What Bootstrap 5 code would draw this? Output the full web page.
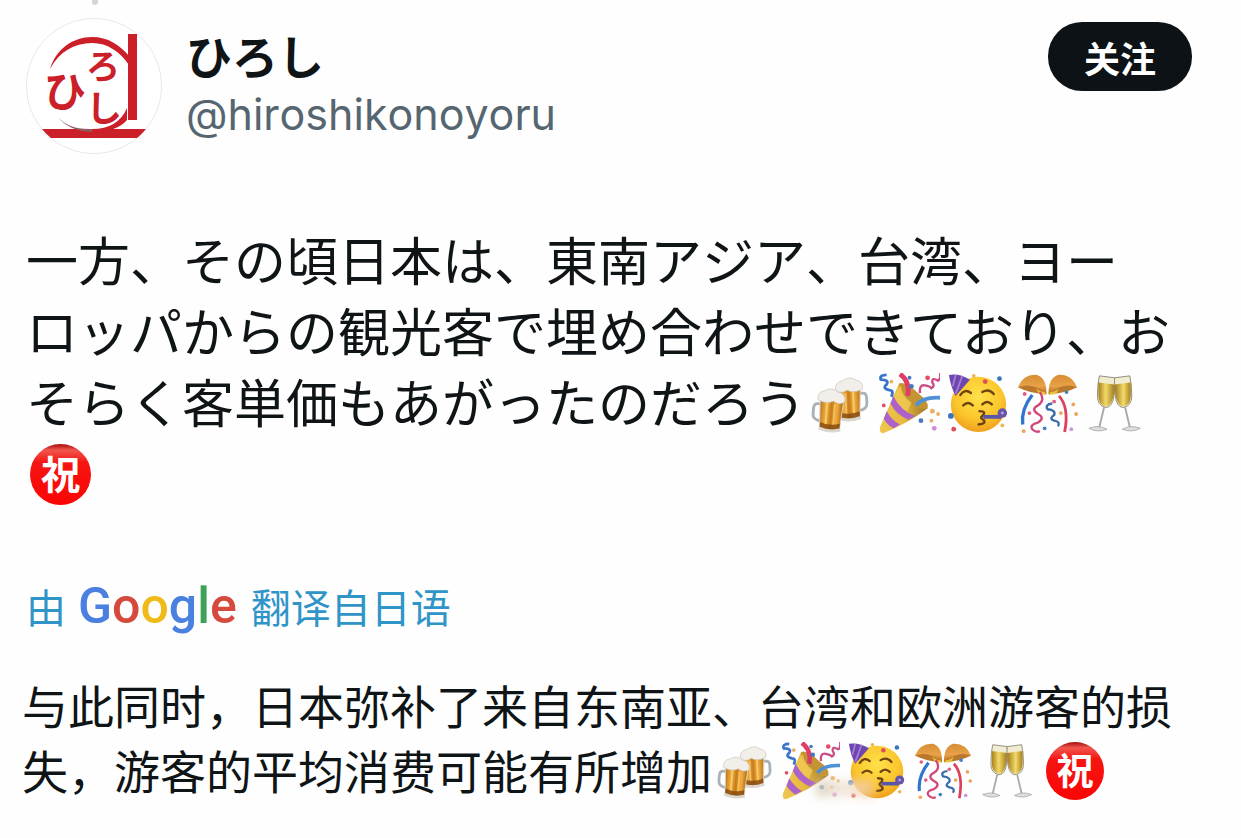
<!DOCTYPE html>
<html lang="ja">
<head>
<meta charset="utf-8">
<meta name="viewport" content="width=device-width, initial-scale=1">
<title>ひろし (@hiroshikonoyoru)</title>
<link href="https://cdn.jsdelivr.net/npm/bootstrap@5.3.0/dist/css/bootstrap.min.css" rel="stylesheet">
<style>
  body { background: #fefefe; color: #0f1416; font-family: Inter, "Noto Sans CJK JP", sans-serif; font-kerning: none; }
  .post-page { padding: 18px 49px 24px 26px; }
  .thread-line { position: absolute; top: 0; left: 92px; width: 6px; height: 5px; border-radius: 0 0 3px 3px; background: #d3d5d6; }
  .avatar { width: 136px; height: 136px; }
  .display-name { font: 700 46px/56px "Noto Sans CJK JP", sans-serif; }
  .handle { font-size: 43px; line-height: 64px; color: #566670; }
  .btn-follow { width: 144px; height: 69px; border-radius: 34px; background: #0c1215; color: #fff; font: 700 36px/1 "Noto Sans CJK SC", sans-serif; }
  .btn-follow:hover { background: #272c30; color: #fff; }
  .post-text { font: 400 52px/71px "Noto Sans CJK JP", sans-serif; font-kerning: none; margin-top: 69px; }
  .source-line { font: 400 40px/60px "Noto Sans CJK SC", sans-serif; color: #2f95c8; margin-top: 69px; }
  .source-line a { color: inherit; text-decoration: none; }
  .google-word { font: 500 50px/60px Roboto, sans-serif; margin: 0 14px 0 12px; }
  .translated-text { font: 400 46px/65px "Noto Sans CJK SC", sans-serif; font-kerning: none; margin: 36px -4px 0; }
  .emoji { width: 61px; height: 61px; margin: 0 4px; vertical-align: -11px; }
  .translated-text .emoji { width: 58px; height: 58px; }
  .smudge { position: absolute; left: 38px; bottom: 5px; width: 58px; height: 17px; background: linear-gradient(90deg, #d9ccb4, #f2e6da, #f3c690); filter: blur(4px); opacity: .8; z-index: 1; }
  .c-blue { color: #4a80e0; } .c-red { color: #d64a3d; } .c-yellow { color: #f0bb18; } .c-green { color: #3da257; }
</style>
</head>
<body>
<svg class="position-absolute" width="0" height="0" aria-hidden="true">
  <defs>
    <linearGradient id="beer" x1="0" x2="1"><stop offset="0" stop-color="#b96f16"/><stop offset=".3" stop-color="#f4b444"/><stop offset=".5" stop-color="#c77d1b"/><stop offset=".75" stop-color="#f3ad3b"/><stop offset="1" stop-color="#a95f12"/></linearGradient>
    <linearGradient id="cone" x1="0" x2="1"><stop offset="0" stop-color="#eec750"/><stop offset=".5" stop-color="#e7b93f"/><stop offset="1" stop-color="#9c7423"/></linearGradient>
    <radialGradient id="face" cx=".5" cy=".35" r=".7"><stop offset="0" stop-color="#ffe14a"/><stop offset=".6" stop-color="#fbc62c"/><stop offset="1" stop-color="#ed961a"/></radialGradient>
    <linearGradient id="bell" x1="0" y1="0" x2="0" y2="1"><stop offset="0" stop-color="#d88d35"/><stop offset=".6" stop-color="#e8a248"/><stop offset="1" stop-color="#b8691b"/></linearGradient>
    <linearGradient id="wine" x1="0" x2="1"><stop offset="0" stop-color="#a8801a"/><stop offset=".45" stop-color="#f2da68"/><stop offset="1" stop-color="#a07a1c"/></linearGradient>
    <linearGradient id="gloss" x1="0" y1="0" x2="0" y2="1"><stop offset="0" stop-color="#a30b0b"/><stop offset=".1" stop-color="#f0564d"/><stop offset=".3" stop-color="#f51512"/><stop offset="1" stop-color="#fa0504"/></linearGradient>

    <g id="mug">
      <path d="M6 21H2q-4 0-4 5v6q0 6 8 7" fill="none" stroke="#a9b2b6" stroke-width="3"/>
      <path d="M4 14h25l-2 31q-10 4-21 0z" fill="url(#beer)" stroke="#d8d2c6" stroke-width="1"/>
      <path d="M12 19v23M20 20v23" stroke="#ffdc83" stroke-width="2" opacity=".6"/>
      <path d="M6 40q10 4 21 0v5q-10 4-21 0z" fill="#7d430d" opacity=".75"/>
      <path d="M5 45q11 5 23 0v3q-11 4-23 0z" fill="#d9d6cd"/>
      <path d="M2 17q-2-8 6-10 7-5 14 0 9 1 8 10-6 4-12 0-6 4-16 0" fill="#f2efea" stroke="#cfc9c0" stroke-width=".8"/>
    </g>
    <symbol id="e-beers" viewBox="0 0 64 64">
      <use href="#mug" transform="translate(56 0) scale(-1 1) rotate(3)"/>
      <use href="#mug" transform="translate(8 11) rotate(5)"/>
    </symbol>

    <symbol id="e-popper" viewBox="0 0 64 64">
      <path d="M21 11L51 37Q30 53 5 63Q0 64 1 57z" fill="url(#cone)"/>
      <path d="M21 11Q21 22 31 30 42 40 51 37 53 30 42 22 28 8 21 11" fill="#c49332"/>
      <path d="M23 13q1 11 11 18l-7 15Q16 37 16 24z" fill="#f0c954" opacity=".8"/>
      <path d="M15 24Q23 40 38 45l-7 4Q18 44 12 32zM8 40q6 10 14 14l-7 4Q8 54 5 48z" fill="#ac62c8"/>
      <path d="M22 1q11 8 8 23" fill="none" stroke="#df3d63" stroke-width="5"/>
      <path d="M39 34q7-9 25-8" fill="none" stroke="#4e91d7" stroke-width="4"/>
      <path d="M8 2q-8 0-6 5 9 0 6 5-5 4 3 6 5 0 2 7" fill="none" stroke="#3b75cb" stroke-width="3"/>
      <path d="M43 21q-1-9 5-8t7 3q4-2 1-6-1-6 6-2 3-1 2-8" fill="none" stroke="#cd4b83" stroke-width="2.5"/>
      <g fill="#4678c4"><circle cx="34" cy="14" r="2.5"/><circle cx="32" cy="5" r="2"/><circle cx="44" cy="50" r="2.5"/></g>
      <g fill="#e44c65"><circle cx="51" cy="5" r="2.5"/><circle cx="5" cy="34" r="2"/></g>
      <g fill="#edae61"><circle cx="56" cy="40" r="2.5"/><circle cx="62" cy="43" r="2"/><circle cx="13" cy="9" r="2"/><circle cx="55" cy="50" r="2"/></g>
      <circle cx="58" cy="58" r="2.5" fill="#cf8bd6"/>
    </symbol>

    <symbol id="e-party" viewBox="0 0 64 64">
      <circle cx="32" cy="33" r="29" fill="url(#face)"/>
      <path d="M1 2Q12 0 23 7L8 24Q3 15 1 2z" fill="#6c48ae"/>
      <path d="M8 2L5 14M15 3L8 22" stroke="#a977d4" stroke-width="2"/>
      <g fill="none" stroke="#6e4211" stroke-linecap="round" stroke-width="2.5"><path d="M13 23q5-7 11-2M36 20q7-4 12 2M16 34q5-5 10 0M36 33q5-5 10 0"/><path d="M33 40q8 0 3 5-3 2 1 4 4 4-5 5"/></g>
      <path d="M37 46H56" stroke="#5856a8" stroke-width="4"/>
      <circle cx="57" cy="42" r="5" fill="#6754a6"/><circle cx="57" cy="42" r="1.5" fill="#b8a7df"/>
      <g fill="#3976bd"><circle cx="54" cy="6" r="2.5"/><circle cx="3" cy="45" r="3"/></g>
      <g fill="#df4c58"><circle cx="39" cy="9" r="2.5"/><circle cx="6" cy="59" r="2.5"/></g>
      <g fill="#efb750"><circle cx="27" cy="3" r="2"/><circle cx="57" cy="55" r="2"/></g>
    </symbol>

    <symbol id="e-ball" viewBox="0 0 64 64">
      <path d="M1 15Q7 1 21 2q10 3 10 20Q14 19 1 15zM63 15Q57 1 43 2q-10 3-10 20Q50 19 63 15z" fill="url(#bell)"/>
      <path d="M1 15q14-6 30 7Q14 22 1 15M63 15q-14-6-30 7Q50 22 63 15" fill="#b9782c"/>
      <path d="M20 16q4 4 9 4l2 3-8-1zM44 16q-4 4-9 4l-2 3 8-1z" fill="#e9c33e"/>
      <path d="M16 23Q4 38 6 54" fill="none" stroke="#2f75cf" stroke-width="3.5"/>
      <path d="M24 20q6 9-2 14-8 4 0 9 8 4 0 9-9 2-6 7 4 4 8 2" fill="none" stroke="#d3487b" stroke-width="2.5"/>
      <path d="M37 32q-8 1-5 6 9 1 7 6-6 4 0 6 7 1 4 6" fill="none" stroke="#3a6cac" stroke-width="2.5"/>
      <path d="M44 24q11 12 6 38" fill="none" stroke="#db435d" stroke-width="3"/>
      <g fill="#e05c84"><circle cx="8" cy="22" r="2"/><circle cx="39" cy="30" r="2"/><circle cx="13" cy="42" r="2"/></g>
      <g fill="#eaa55b"><circle cx="59" cy="33" r="2"/><circle cx="62" cy="43" r="2"/><circle cx="46" cy="42" r="2"/><circle cx="7" cy="61" r="2"/></g>
      <g fill="#4583c1"><circle cx="52" cy="20" r="2"/><circle cx="29" cy="58" r="2"/></g>
      <circle cx="57" cy="59" r="2" fill="#c997d5"/>
    </symbol>

    <!-- left glass; the right one mirrors it -->
    <g id="flute">
      <path d="M14 3 30 5Q31 20 28 30 25 37 20 36 12 34 12 24 12 12 14 3z" fill="#f1ebcf" stroke="#8e8b80" stroke-width="1"/>
      <path d="M13 10 30 12Q30 24 27 30 24 36 20 35 13 33 13 23z" fill="url(#wine)"/>
      <path d="M19 36 14 57" stroke="#a9a9ac" stroke-width="2"/>
      <path d="M3 58q10-4 19 1-10 4-19-1" fill="#dededf" stroke="#a0a0a3" stroke-width=".8"/>
    </g>
    <symbol id="e-glasses" viewBox="0 0 64 64">
      <use href="#flute"/>
      <use href="#flute" transform="translate(60 0) scale(-1 1)"/>
    </symbol>

    <symbol id="e-iwai" viewBox="0 0 64 64">
      <circle cx="32" cy="32" r="32" fill="url(#gloss)"/>
      <text x="32" y="47" text-anchor="middle" font-family="Noto Sans CJK JP, sans-serif" font-weight="700" font-size="41" fill="#fff">祝</text>
    </symbol>
  </defs>
</svg>

<main class="container-fluid post-page position-relative">
  <span class="thread-line"></span>
  <header class="d-flex align-items-start">
    <svg class="avatar flex-shrink-0" viewBox="0 0 136 136" role="img" aria-label="ひろし">
      <circle cx="68" cy="68" r="67.5" fill="#fff" stroke="#e8e8e8"/>
      <g fill="#cb2029">
        <path d="M102 16h9v86h-9z"/>
        <path d="M16 111H120Q115 117 111 120H25Q20 116 16 111z"/>
        <path d="M24 51C30 31 47 19 66 19 82 19 94 27 103 38V47C94 34 82 25 66 25 48 25 33 34 24 51z"/>
        <path d="M66 111Q92 111 101 90V102Q91 114 66 114z"/>
        <path d="M31 98Q42 112 66 111V114Q42 113 31 98z" fill="#925b60"/>
        <g font-family="Noto Sans CJK JP, sans-serif" font-weight="700">
          <text x="18" y="89" font-size="42">ひ</text>
          <text x="60" y="61" font-size="34">ろ</text>
          <text x="60" y="104" font-size="36">し</text>
        </g>
      </g>
    </svg>
    <div class="ms-4 pt-2 flex-grow-1">
      <div class="display-name">ひろし</div>
      <div class="handle">@hiroshikonoyoru</div>
    </div>
    <button type="button" lang="zh-CN" class="btn btn-follow border-0 p-0 mt-1 flex-shrink-0">关注</button>
  </header>

  <p class="post-text mb-0">一方、その頃日本は、東南アジア、台湾、ヨー<br>ロッパからの観光客で埋め合わせできており、お<br>そらく客単価もあがったのだろう<svg class="emoji" role="img" aria-label="🍻"><use href="#e-beers"/></svg><svg class="emoji" role="img" aria-label="🎉"><use href="#e-popper"/></svg><svg class="emoji" role="img" aria-label="🥳"><use href="#e-party"/></svg><svg class="emoji" role="img" aria-label="🎊"><use href="#e-ball"/></svg><svg class="emoji" role="img" aria-label="🥂"><use href="#e-glasses"/></svg><br><svg class="emoji" role="img" aria-label="㊗️"><use href="#e-iwai"/></svg></p>

  <div class="source-line" lang="zh-CN"><a href="#translation" class="d-inline-flex align-items-center"><span>由</span><span class="google-word"><span class="c-blue">G</span><span class="c-red">o</span><span class="c-yellow">o</span><span class="c-blue">g</span><span class="c-green">l</span><span class="c-red">e</span></span><span>翻译自日语</span></a></div>

  <p id="translation" class="translated-text" lang="zh-CN">与此同时，日本弥补了来自东南亚、台湾和欧洲游客的损失，游客的平均消费可能有所增加<svg class="emoji" role="img" aria-label="🍻"><use href="#e-beers"/></svg><span class="position-relative"><svg class="emoji" role="img" aria-label="🎉"><use href="#e-popper"/></svg><span class="smudge"></span></span><svg class="emoji" role="img" aria-label="🥳"><use href="#e-party"/></svg><svg class="emoji" role="img" aria-label="🎊"><use href="#e-ball"/></svg><svg class="emoji" role="img" aria-label="🥂"><use href="#e-glasses"/></svg><svg class="emoji" role="img" aria-label="㊗️"><use href="#e-iwai"/></svg></p>
</main>
<script src="https://cdn.jsdelivr.net/npm/bootstrap@5.3.0/dist/js/bootstrap.bundle.min.js"></script>
</body>
</html>
